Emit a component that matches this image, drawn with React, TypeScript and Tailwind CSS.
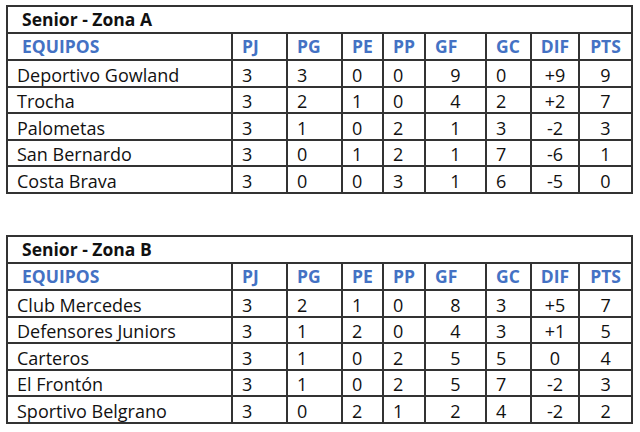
import React from "react";

type Row = [string, string, string, string, string, string, string, string, string];

const zonaA: Row[] = [
  ["Deportivo Gowland", "3", "3", "0", "0", "9", "0", "+9", "9"],
  ["Trocha", "3", "2", "1", "0", "4", "2", "+2", "7"],
  ["Palometas", "3", "1", "0", "2", "1", "3", "-2", "3"],
  ["San Bernardo", "3", "0", "1", "2", "1", "7", "-6", "1"],
  ["Costa Brava", "3", "0", "0", "3", "1", "6", "-5", "0"],
];

const zonaB: Row[] = [
  ["Club Mercedes", "3", "2", "1", "0", "8", "3", "+5", "7"],
  ["Defensores Juniors", "3", "1", "2", "0", "4", "3", "+1", "5"],
  ["Carteros", "3", "1", "0", "2", "5", "5", "0", "4"],
  ["El Frontón", "3", "1", "0", "2", "5", "7", "-2", "3"],
  ["Sportivo Belgrano", "3", "0", "2", "1", "2", "4", "-2", "2"],
];

const widths = [225, 55, 55, 41, 42, 61, 45, 48, 53];
const headers = ["EQUIPOS", "PJ", "PG", "PE", "PP", "GF", "GC", "DIF", "PTS"];
// columns whose content sits in the middle of the cell
const centered = [false, false, false, false, false, true, false, true, true];
const rowHeights = [27, 26, 27, 26, 27];

function Zona({ title, rows }: { title: string; rows: Row[] }) {
  return (
    <table className="table-fixed border-collapse w-[625px] text-[18px] leading-none text-[#111]">
      <colgroup>
        {widths.map((w, i) => (
          <col key={i} style={{ width: w }} />
        ))}
      </colgroup>
      <tbody>
        <tr className="h-[27px]">
          <td colSpan={9} className="border-2 border-[#333] pl-[14px] pt-[1px] font-bold text-[17.5px]">
            {title}
          </td>
        </tr>
        <tr className="h-[27px]">
          {headers.map((h, i) => (
            <td
              key={h}
              className={`border-2 border-[#333] pt-[1px] font-bold text-[17.5px] text-[#4472c4] ${
                i === 0 ? "pl-[14px]" : centered[i] && i !== 5 ? "text-center" : "pl-[9px]"
              }`}
            >
              {h}
            </td>
          ))}
        </tr>
        {rows.map((r, ri) => (
          <tr key={r[0]} style={{ height: rowHeights[ri] }}>
            {r.map((c, i) => (
              <td
                key={i}
                className={`border-2 border-[#333] pt-[2px] ${
                  i === 0 ? "pl-[9px]" : centered[i] ? "text-center" : "pl-[9px]"
                }`}
              >
                {c}
              </td>
            ))}
          </tr>
        ))}
      </tbody>
    </table>
  );
}

export default function App() {
  return (
    <div
      className="w-[640px] h-[432px] bg-white pl-[6px] pt-[5px] flex flex-col gap-[41px]"
      style={{ fontFamily: '"Open Sans", "Noto Sans", sans-serif' }}
    >
      <Zona title="Senior - Zona A" rows={zonaA} />
      <Zona title="Senior - Zona B" rows={zonaB} />
    </div>
  );
}
